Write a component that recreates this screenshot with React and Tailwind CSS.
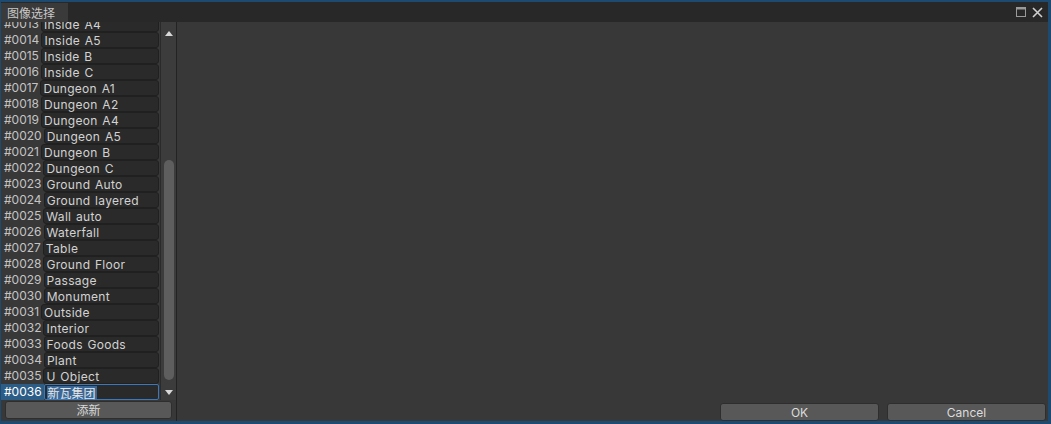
import React from "react";

const rows = [
  ["#0013", "Inside A4"],
  ["#0014", "Inside A5"],
  ["#0015", "Inside B"],
  ["#0016", "Inside C"],
  ["#0017", "Dungeon A1"],
  ["#0018", "Dungeon A2"],
  ["#0019", "Dungeon A4"],
  ["#0020", "Dungeon A5"],
  ["#0021", "Dungeon B"],
  ["#0022", "Dungeon C"],
  ["#0023", "Ground Auto"],
  ["#0024", "Ground layered"],
  ["#0025", "Wall auto"],
  ["#0026", "Waterfall"],
  ["#0027", "Table"],
  ["#0028", "Ground Floor"],
  ["#0029", "Passage"],
  ["#0030", "Monument"],
  ["#0031", "Outside"],
  ["#0032", "Interior"],
  ["#0033", "Foods Goods"],
  ["#0034", "Plant"],
  ["#0035", "U Object"],
];

export default function App() {
  return (
    <div
      className="w-[1051px] h-[424px] bg-[#1d4a70] pt-[2px] pl-[1px] pr-[3px] pb-[3px] flex flex-col text-[12px] leading-none"
      style={{ fontFamily: 'Inter, "Noto Sans", "Noto Sans CJK SC", sans-serif' }}
    >
      {/* title bar */}
      <div className="h-[20px] bg-[#282828] flex items-end justify-between shrink-0 relative z-10">
        <div
          className="h-[19px] w-[67px] bg-[#3a3a3a] flex items-center pl-[6px] pt-[1px] text-[#c8c8c8] text-[12px] leading-[14px]"
          style={{ fontFamily: '"Noto Sans CJK SC", sans-serif' }}
        >
          图像选择
        </div>
        <div className="flex items-center gap-[6px] h-[20px] pr-[5px]">
          <svg width="10" height="10" viewBox="0 0 10 10">
            <rect x="0.5" y="0.5" width="9" height="9" fill="none" stroke="#9a9a9a" strokeWidth="1" />
            <rect x="0.5" y="0.5" width="9" height="2" fill="#9a9a9a" />
          </svg>
          <svg width="11" height="11" viewBox="0 0 11 11">
            <path d="M1 1 L10 10 M10 1 L1 10" stroke="#d0d0d0" strokeWidth="1.6" />
          </svg>
        </div>
      </div>

      {/* content */}
      <div className="flex-1 flex bg-[#383838] min-h-0">
        {/* left panel */}
        <div className="w-[175px] flex flex-col shrink-0">
          <div className="flex-1 flex min-h-0">
            <div className="w-[159px] overflow-hidden">
              <div className="mt-[-6px] flex flex-col">
                {rows.map(([id, name]) => (
                  <div key={id} className="h-[16px] flex items-center">
                    <div className="pl-[3px] pr-[2px] text-[#c4c4c4] h-[16px] flex items-center">{id}</div>
                    <div className="flex-1 h-[16px] bg-[#2a2a2a] border border-[#202020] rounded-[3px] flex items-center pl-[2px] pt-[2px] text-[#d2d2d2] tracking-[0.3px] [word-spacing:1px]">
                      {name}
                    </div>
                  </div>
                ))}
                <div className="h-[16px] flex items-center">
                  <div className="pl-[3px] pr-[2px] h-[16px] bg-[#2c5d87] text-white flex items-center">#0036</div>
                  <div className="flex-1 h-[16px] bg-[#2a2a2a] border border-[#3a79bb] rounded-[2px] flex items-center pl-[2px] pt-[1px]">
                    <span
                      className="bg-[#3a6796] text-[#e6e6e6] h-[13px] leading-[13px] flex items-center px-[1px]"
                      style={{ fontFamily: '"Noto Sans CJK SC", sans-serif' }}
                    >
                      新瓦集团
                    </span>
                  </div>
                </div>
              </div>
            </div>
            {/* scrollbar */}
            <div className="w-[16px] ml-[1px] border-l border-[#2a2a2a] bg-[#3c3c3c] flex flex-col items-center">
              <div className="h-[12px] flex items-end justify-center mt-[2px]">
                <svg width="8" height="5" viewBox="0 0 8 5"><path d="M4 0 L8 5 L0 5 Z" fill="#d8d8d8" /></svg>
              </div>
              <div className="flex-1 w-full flex flex-col items-center pt-[124px] pb-[6px]">
                <div className="w-[10px] flex-1 rounded-full bg-[#5e5e5e]" />
              </div>
              <div className="h-[14px] flex items-start justify-center pt-[4px]">
                <svg width="8" height="5" viewBox="0 0 8 5"><path d="M0 0 L8 0 L4 5 Z" fill="#d8d8d8" /></svg>
              </div>
            </div>
          </div>
          <div className="h-[21px] pl-[4px] pr-[4px] pt-[1px] pb-[2px] shrink-0">
            <button
              className="w-full h-[18px] bg-[#585858] rounded-[3px] border border-[#2e2e2e] text-[#d8d8d8] flex items-center justify-center leading-[14px]"
              style={{ fontFamily: '"Noto Sans CJK SC", sans-serif' }}
            >
              添新
            </button>
          </div>
        </div>
        {/* divider */}
        <div className="w-[1px] bg-[#232323] shrink-0" />
        {/* right area */}
        <div className="flex-1 flex flex-col justify-end items-end pr-[2px]">
          <div className="flex gap-[8px]">
            <button className="w-[159px] h-[18px] bg-[#585858] rounded-[3px] border border-[#2e2e2e] text-[#dcdcdc] flex items-center justify-center pt-[1px]">OK</button>
            <button className="w-[159px] h-[18px] bg-[#585858] rounded-[3px] border border-[#2e2e2e] text-[#dcdcdc] flex items-center justify-center pt-[1px]">Cancel</button>
          </div>
        </div>
      </div>
    </div>
  );
}
